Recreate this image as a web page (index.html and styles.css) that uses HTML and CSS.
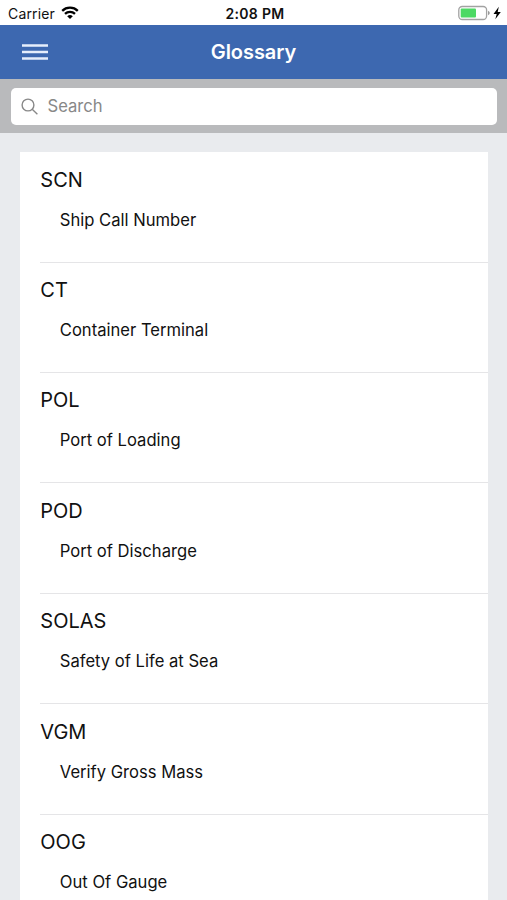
FILE: index.html
```html
<!DOCTYPE html>
<html lang="en">
<head>
<meta charset="utf-8">
<title>Glossary</title>
<link rel="stylesheet" href="styles.css">
</head>
<body>
<div class="status">
  <div class="carrier"><span>Carrier</span>
    <svg class="wifi" width="18" height="14" viewBox="0 0 18 14"><path d="M1.200 4.800a11.200 11.200 0 0 1 15.600 0M4 7.900a7.200 7.200 0 0 1 10 0" fill="none" stroke="#000" stroke-width="2.300"/><path d="M9 13 6.200 10.300a4.200 4.200 0 0 1 5.600 0z"/></svg>
  </div>
  <div class="time">2:08 PM</div>
  <svg class="battery" width="44" height="16" viewBox="0 0 44 16"><rect x=".8" y="1.500" width="27.800" height="13" rx="3.500" fill="none" stroke="#a2a2a2" stroke-width="1.300"/><rect x="2.700" y="3.500" width="15.300" height="9" rx="1" fill="#4cd964"/><path d="M30 5.800q1.800.7 1.800 2.200t-1.800 2.200z" fill="#999"/><path d="M40.800 1.800 35.500 9h3.200L37.300 14.200 42.800 7H39.700z"/></svg>
</div>
<header class="nav">
  <svg class="menu" width="26" height="18" viewBox="0 0 26 18"><path d="M0 2.500h26M0 9h26M0 15.500h26" stroke="#e6eefc" stroke-width="2.500"/></svg>
  <h1>Glossary</h1>
</header>
<div class="searchbar">
  <label class="field">
    <svg width="18" height="18" viewBox="0 0 18 18" fill="none" stroke="#888" stroke-width="1.400"><circle cx="7" cy="7" r="5.900"/><path d="m11.200 11.200 5.200 5"/></svg>
    <span>Search</span>
  </label>
</div>
<main class="list">
  <section><h2>SCN</h2><p>Ship Call Number</p></section>
  <section><h2>CT</h2><p>Container Terminal</p></section>
  <section><h2>POL</h2><p>Port of Loading</p></section>
  <section><h2>POD</h2><p>Port of Discharge</p></section>
  <section><h2>SOLAS</h2><p>Safety of Life at Sea</p></section>
  <section><h2>VGM</h2><p>Verify Gross Mass</p></section>
  <section><h2>OOG</h2><p>Out Of Gauge</p></section>
</main>
</body>
</html>
```
FILE: styles.css
```css
* { box-sizing: border-box; }
body { margin: 0; height: 900px; overflow: hidden; background: #e9ebee; color: #111; font-family: Inter, sans-serif; display: flex; flex-direction: column; }
.status { height: 25.4px; flex: none; background: #fff; display: grid; grid-template-columns: 1fr auto 1fr; align-items: center; padding: 1px 5px 0 8px; font-size: 14px; }
.carrier { display: flex; align-items: center; gap: 6.500px; letter-spacing: 0.15px; }
.time { font-weight: 600; letter-spacing: 0.300px; }
.battery { justify-self: end; }
.nav { height: 53.6px; flex: none; background: #3d68b0; display: grid; grid-template-columns: 1fr auto 1fr; align-items: center; padding: 0 22px 1px; color: #fff; }
.nav h1 { margin: 0; font-size: 20px; font-weight: 600; letter-spacing: -0.05px; }
.searchbar { height: 54px; flex: none; background: #b9babc; padding: 8.700px 10px 8.300px 10.500px; }
.field { display: flex; align-items: center; height: 37px; background: #fff; border-radius: 5px; padding-left: 10.500px; gap: 8.500px; color: #888; font-size: 16.600px; }
.field svg { position: relative; top: 0.500px; }
.list { margin: 19.300px 19px 0 20.300px; background: #fff; flex: none; padding-left: 20px; }
.list section { height: 110.400px; border-bottom: 1px solid #e5e5e7; padding-top: 15.400px; }
.list h2 { margin: 0; font-size: 20px; line-height: 25px; font-weight: 400; }
.list p { margin: 17px 0 0 19.500px; font-size: 16.600px; line-height: 20px; }
```
